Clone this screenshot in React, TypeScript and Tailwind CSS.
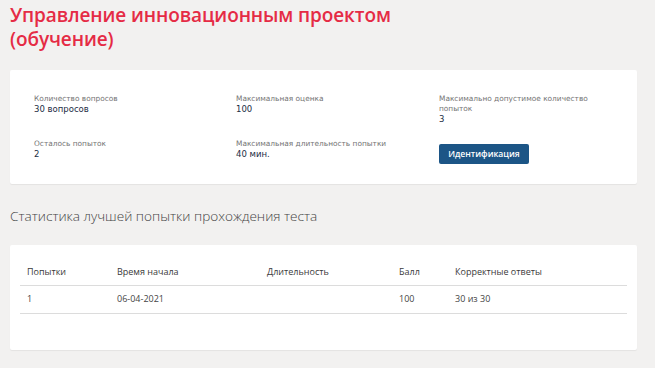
import React from "react";

const font = { fontFamily: '"Open Sans", "Noto Sans", sans-serif' };
const fieldFont = { fontFamily: '"DejaVu Sans", Verdana, sans-serif' };

function Field({ label, value, labelClass = "" }: { label: string; value: string; labelClass?: string }) {
  return (
    <div style={fieldFont}>
      <div className={`text-[7.4px] leading-[10px] text-[#747474] ${labelClass}`}>{label}</div>
      <div className="text-[8.5px] leading-[10px] text-[#1c2d44]">{value}</div>
    </div>
  );
}

export default function App() {
  const rows = [{ a: "1", t: "06-04-2021", d: "", b: "100", c: "30 из 30" }];
  return (
    <div className="w-[655px] h-[368px] overflow-hidden bg-[#f2f1f0] pl-[10px] pr-[18px]" style={font}>
      <h1 className="pt-[3px] text-[19px] leading-[24px] font-semibold text-[#e52b45] tracking-[-0.1px]">
        Управление инновационным проектом
        <br />
        (обучение)
      </h1>
      <div className="mt-[19px] h-[114px] bg-white rounded-[2px] shadow-[0_1px_1px_rgba(0,0,0,0.06)] pt-[24px] pl-[24px]">
        <div className="grid grid-cols-[202px_203px_1fr] gap-y-[15px]">
          <Field label="Количество вопросов" value="30 вопросов" />
          <Field label="Максимальная оценка" value="100" />
          <Field label="Максимально допустимое количество попыток" value="3" labelClass="w-[155px]" />
          <Field label="Осталось попыток" value="2" />
          <Field label="Максимальная длительность попытки" value="40 мин." />
          <div>
            <button className="w-[90px] h-[20px] rounded-[2px] bg-[#1c5586] text-white text-[8.6px] font-semibold leading-[20px] text-center">
              Идентификация
            </button>
          </div>
        </div>
      </div>
      <h2 className="mt-[22px] text-[13.6px] leading-[20px] font-light text-[#444]">
        Статистика лучшей попытки прохождения теста
      </h2>
      <div className="mt-[19px] h-[105px] bg-white rounded-[2px] shadow-[0_1px_1px_rgba(0,0,0,0.06)] pt-[13px] px-[10px]">
        <table className="w-full border-collapse text-[9px] text-[#3a3a3a]">
          <thead>
            <tr className="h-[27px] border-b border-[#dcdcdc] text-left">
              <th className="w-[90px] pl-[7px] font-normal">Попытки</th>
              <th className="w-[150px] pl-[7px] font-normal">Время начала</th>
              <th className="w-[132px] pl-[7px] font-normal">Длительность</th>
              <th className="w-[56px] pl-[7px] font-normal">Балл</th>
              <th className="pl-[7px] font-normal">Корректные ответы</th>
            </tr>
          </thead>
          <tbody>
            {rows.map((r) => (
              <tr key={r.a} className="h-[28px] border-b border-[#dcdcdc] text-[#444]">
                <td className="pl-[7px]">{r.a}</td>
                <td className="pl-[7px]">{r.t}</td>
                <td className="pl-[7px]">{r.d}</td>
                <td className="pl-[7px]">{r.b}</td>
                <td className="pl-[7px]">{r.c}</td>
              </tr>
            ))}
          </tbody>
        </table>
      </div>
    </div>
  );
}
